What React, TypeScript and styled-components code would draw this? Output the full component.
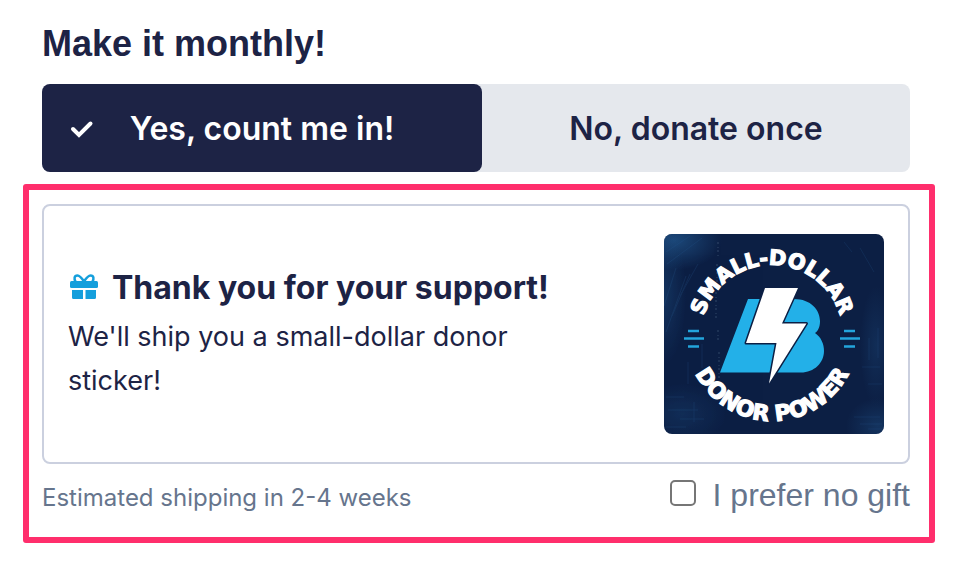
import React, { useState } from "react";
import styled, { createGlobalStyle } from "styled-components";

const navy = "#1d2345";
const slate = "#66758d";
const sans = `Inter, "Liberation Sans", sans-serif`;
const grotesk = `"Liberation Sans", Arial, sans-serif`;

const GlobalStyle = createGlobalStyle`
  *, *::before, *::after { box-sizing: border-box; }
  body { margin: 0; background: #fff; color: ${navy}; font-family: ${sans}; }
`;

const Page = styled.main`
  padding: 20px 23px 24px;
`;

const Frequency = styled.section`
  padding: 0 25px 0 19px;
`;

const Title = styled.h1`
  margin: 0 0 16px;
  font: 700 36px/48px ${grotesk};
`;

const Toggle = styled.div`
  display: grid;
  grid-template-columns: 440fr 428fr;
  border-radius: 8px;
  background: #e5e8ed;
`;

const ToggleButton = styled.button<{ $active: boolean }>`
  display: flex;
  align-items: center;
  justify-content: center;
  height: 88px;
  padding: 2px 28px 0;
  border: 0;
  border-radius: 8px;
  background: ${(p) => (p.$active ? navy : "transparent")};
  color: ${(p) => (p.$active ? "#fff" : navy)};
  font: 600 32px/40px ${sans};
  cursor: pointer;
`;

const ToggleLabel = styled.span`
  flex: 1;
  text-align: center;
`;

const CheckMark = styled.svg`
  width: 24px;
  height: 24px;
  margin-right: -24px;
`;

const Highlight = styled.section`
  margin-top: 12px;
  padding: 14px 19px 22px 13px;
  border: 6px solid #ff2e6c;
  border-radius: 3px;
`;

const GiftCard = styled.article`
  display: flex;
  align-items: center;
  justify-content: space-between;
  gap: 24px;
  padding: 28px 24px;
  border: 2px solid #cbd0df;
  border-radius: 8px;
`;

const GiftText = styled.div`
  flex: 1;
  max-width: 500px;
`;

const GiftHeading = styled.h2`
  display: flex;
  align-items: center;
  gap: 14px;
  margin: 0 0 4px;
  font: 700 32px/46px ${sans};
`;

const GiftIcon = styled.svg`
  width: 30px;
  height: 28px;
  flex: none;
`;

const GiftCopy = styled.p`
  margin: 0;
  font: 400 27px/44px ${sans};
`;

const Sticker = styled.svg`
  display: block;
  width: 220px;
  height: 200px;
  flex: none;
  border-radius: 8px;
`;

const Footer = styled.footer`
  display: flex;
  align-items: center;
  justify-content: space-between;
  padding-top: 11px;
  color: ${slate};
`;

const Shipping = styled.p`
  margin: 6px 0 0;
  font: 400 24px/32px ${sans};
`;

const OptOut = styled.label`
  display: flex;
  align-items: center;
  gap: 17px;
  font: 400 32px/40px ${grotesk};
  cursor: pointer;
`;

const Checkbox = styled.input`
  appearance: none;
  width: 26px;
  height: 26px;
  margin: 0 0 4px;
  border: 2px solid #767676;
  border-radius: 5px;
  background: #fff;

  &:checked {
    background: ${navy};
  }
`;

function StickerArt() {
  return (
    <Sticker viewBox="0 0 220 200" role="img" aria-label="Small-Dollar Donor Power sticker">
      <defs>
        <radialGradient id="corner">
          <stop offset="0" stopColor="#1f5287" stopOpacity=".8" />
          <stop offset="1" stopColor="#1f5287" stopOpacity="0" />
        </radialGradient>
        <path id="arcTop" d="M37 102a71 71 0 0 1 142 0" />
        <path id="arcBottom" d="M22 101a86 86 0 0 0 172 0" />
      </defs>
      <rect width="220" height="200" fill="#0c1f44" />
      <ellipse cx="10" cy="6" rx="48" ry="30" fill="url(#corner)" />
      <ellipse cx="0" cy="60" rx="22" ry="70" fill="url(#corner)" opacity=".5" />
      <ellipse cx="214" cy="192" rx="32" ry="28" fill="url(#corner)" opacity=".5" />
      <ellipse cx="18" cy="180" rx="44" ry="30" fill="url(#corner)" opacity=".35" />
      <ellipse cx="212" cy="112" rx="16" ry="60" fill="url(#corner)" opacity=".35" />
      <g stroke="#2a6198" fill="none" opacity=".2">
        <path d="M2 98 22 42M8 82 26 40M0 72 12 34M16 62 34 30M3 30 38 4M2 18 26 2" />
        <path d="M2 163h18M4 176h30M16 185h24M2 193h20M30 168v20M38 110v24M24 128v22" />
        <path d="M196 190h22M190 183h26M204 195h14M204 150h14M198 133h18M214 94v30M205 104v22M180 8l8 10M196 14l14 24" />
      </g>
      <path d="M54 8v14M53 30v18M52 58v28M54 96v12M55 118v28" stroke="#7890ad" strokeDasharray="2 3 1 2" opacity=".35" />
      <g
        fill="#fff"
        stroke="#fff"
        strokeWidth="1.200"
        fontFamily={`"DejaVu Sans", Inter, sans-serif`}
        fontWeight="700"
        textAnchor="middle"
      >
        <text fontSize="21">
          <textPath href="#arcTop" startOffset="50%">SMALL-DOLLAR</textPath>
        </text>
        <text fontSize="22">
          <textPath href="#arcBottom" startOffset="50%">DONOR POWER</textPath>
        </text>
      </g>
      <path d="M84 65H130C147 65 156 76 156 87C156 93 154 97 151 99C157 103 160 110 160 117C160 129 150 138.500 137 138.500H56Z" fill="#23b0e8" />
      <path
        d="M101 54H134L118 89.500H142.500L105 149.500L112.500 109H82Z"
        fill="#fff"
        stroke="#0c1f44"
        strokeWidth="3"
        strokeLinejoin="round"
        paintOrder="stroke"
      />
      <path d="M24 97H35M20 104.500H40M24 112.500H35M180 97H191M176 104.500H196M180 112.500H191" stroke="#23a5dc" strokeWidth="2.500" />
    </Sticker>
  );
}

export default function App() {
  const [monthly, setMonthly] = useState(true);
  const [noGift, setNoGift] = useState(false);

  return (
    <>
      <GlobalStyle />
      <Page>
        <Frequency>
          <Title>Make it monthly!</Title>
          <Toggle role="group" aria-label="Donation frequency">
            <ToggleButton type="button" $active={monthly} aria-pressed={monthly} onClick={() => setMonthly(true)}>
              {monthly && (
                <CheckMark viewBox="0 0 24 24" aria-hidden="true">
                  <path
                    d="m3 12 6 6L20.500 6.500"
                    fill="none"
                    stroke="#fff"
                    strokeWidth="4"
                    strokeLinecap="round"
                  />
                </CheckMark>
              )}
              <ToggleLabel>Yes, count me in!</ToggleLabel>
            </ToggleButton>
            <ToggleButton type="button" $active={!monthly} aria-pressed={!monthly} onClick={() => setMonthly(false)}>
              <ToggleLabel>No, donate once</ToggleLabel>
            </ToggleButton>
          </Toggle>
        </Frequency>
        <Highlight>
          <GiftCard>
            <GiftText>
              <GiftHeading>
                <GiftIcon viewBox="0 0 30 28" aria-hidden="true">
                  <g fill="#159fdc">
                    <rect x="2" y="7" width="28" height="7" rx="1.500" />
                    <path d="M4 16H15V25H5.500Q4 25 4 23.500ZM17.500 16H28V23.500Q28 25 26.500 25H17.500Z" />
                  </g>
                  <path
                    d="M16 7.500C13 3 11.500 1.500 9.500 1.500C6 1.500 6 5 7.500 7.500M16 7.500C19 3 20.500 1.500 22.500 1.500C26 1.500 26 5 24.500 7.500"
                    fill="none"
                    stroke="#159fdc"
                    strokeWidth="2.500"
                  />
                </GiftIcon>
                Thank you for your support!
              </GiftHeading>
              <GiftCopy>We'll ship you a small-dollar donor sticker!</GiftCopy>
            </GiftText>
            <StickerArt />
          </GiftCard>
          <Footer>
            <Shipping>Estimated shipping in 2-4 weeks</Shipping>
            <OptOut>
              <Checkbox type="checkbox" checked={noGift} onChange={(e) => setNoGift(e.target.checked)} />
              I prefer no gift
            </OptOut>
          </Footer>
        </Highlight>
      </Page>
    </>
  );
}
